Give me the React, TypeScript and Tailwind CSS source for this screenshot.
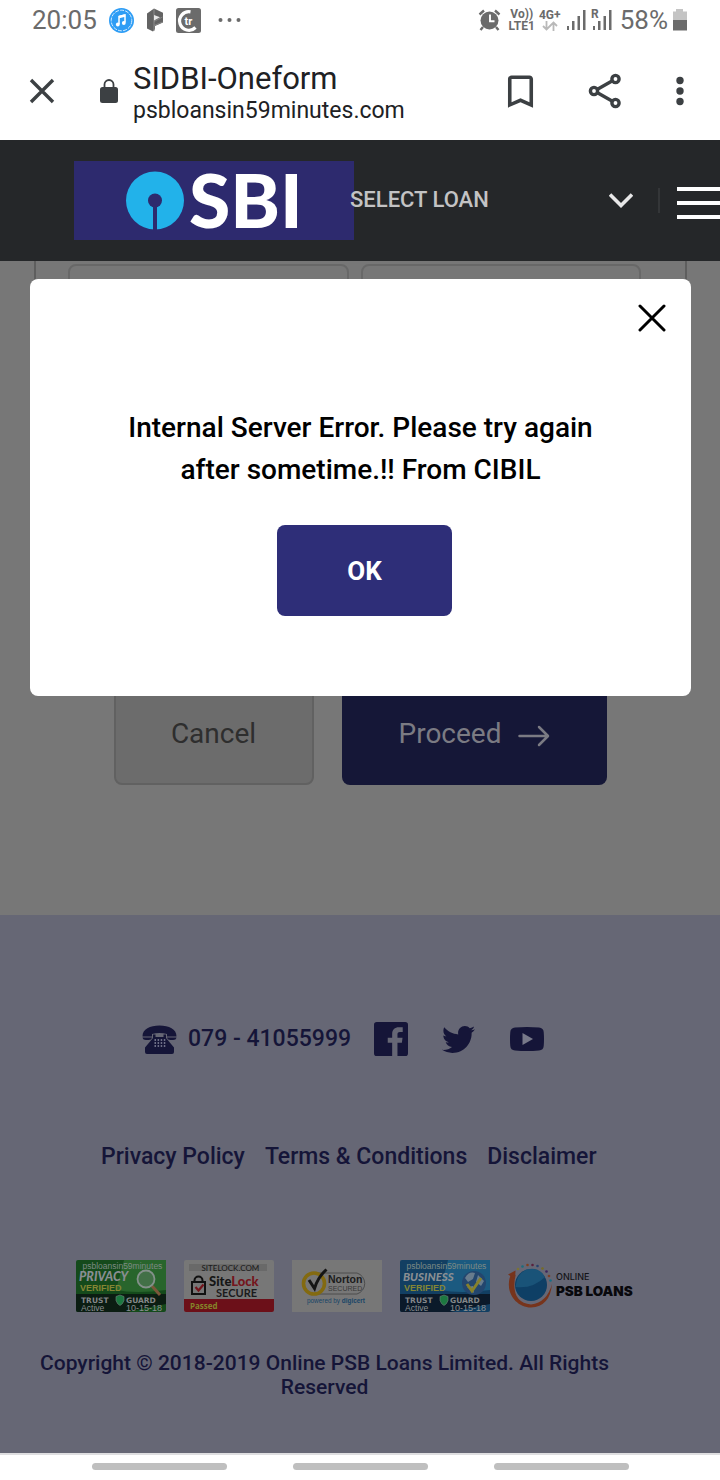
import React from "react";
import { FaTwitter } from "react-icons/fa";
import { MdBookmarkBorder } from "react-icons/md";

function StatusBar() {
  return (
    <div className="flex h-10 items-center bg-white pl-8 pr-8 text-[26px] leading-8 text-[#6b6b6b]">
      <span>20:05</span>
      <svg className="ml-3" width="25" height="25" viewBox="0 0 25 25" aria-hidden="true">
        <circle cx="12.5" cy="12.5" r="12.5" fill="#2e9df5" />
        <circle cx="12.5" cy="12.5" r="10.3" fill="none" stroke="#d5ecff" strokeWidth="1" strokeDasharray="4 1.2" />
        <path d="M10 16V8.500l6-1.500v7.500" fill="none" stroke="#fff" strokeWidth="1.500" />
        <path d="M10 9l6-1.500" stroke="#fff" strokeWidth="2.400" />
        <circle cx="8.800" cy="16.500" r="1.900" fill="#fff" />
        <circle cx="14.800" cy="15" r="1.900" fill="#fff" />
      </svg>
      <svg className="ml-3" width="18" height="24" viewBox="0 0 18 24" aria-hidden="true">
        <path d="M1 5.500 8 .5l9 4.200v9.800l-8 3.500v3L7 23.500 1 20.500z" fill="#636363" />
        <path d="M8 1v22" stroke="#8d8d8d" strokeWidth="1" />
        <path d="M8 17.500l8.500-3.500M8 13.500l8.500-4.500" stroke="#8d8d8d" strokeWidth=".8" />
        <path d="M8 7l6 2.200L8 12.500z" fill="#e8e8e8" />
      </svg>
      <svg className="ml-3" width="25" height="25" viewBox="0 0 25 25" aria-hidden="true">
        <rect width="25" height="25" rx="2.500" fill="#6b6b6b" />
        <path d="M14.500 3.800A9.300 9.300 0 1 0 19.500 19.500" fill="none" stroke="#fff" strokeWidth="3.200" />
        <text x="8.500" y="16.500" fontSize="11" fontWeight="700" fill="#fff" fontFamily="Roboto, sans-serif">tr</text>
      </svg>
      <svg className="ml-4" width="26" height="6" viewBox="0 0 26 6" fill="#6b6b6b" aria-hidden="true">
        <circle cx="3.500" cy="3" r="2" />
        <circle cx="12.500" cy="3" r="2" />
        <circle cx="21.500" cy="3" r="2" />
      </svg>
      <div className="ml-auto flex items-center">
        <svg width="24" height="24" viewBox="0 0 24 24" aria-hidden="true">
          <circle cx="11.500" cy="12.500" r="9" fill="#6b6b6b" />
          <path d="M1.500 6.500l4.500-4M17 2.500l4.500 4M5 19l-2.500 3M18 19l2.500 3" stroke="#6b6b6b" strokeWidth="2.400" />
          <path d="M12 6.500v6.700h4.500" fill="none" stroke="#fff" strokeWidth="1.900" />
        </svg>
        <span className="ml-1 w-8 text-center text-[12px] font-bold leading-3">
          Vo))
          <br />
          LTE1
        </span>
        <span className="flex w-6 flex-col items-center">
          <span className="text-[12px] font-bold leading-3">4G+</span>
          <svg width="16" height="10" viewBox="0 0 16 10" fill="none" stroke="#b9b9b9" strokeWidth="1.800" aria-hidden="true">
            <path d="M4.500 0v8M1 5l3.500 3.500L8 5M11.500 10V1.500M8 5l3.500-3.500L15 5" />
          </svg>
        </span>
        <svg className="ml-1" width="48" height="24" viewBox="0 0 48 24" fill="#6b6b6b" aria-hidden="true">
          <path d="M1 18h2v4H1zM6 13h2.500v9H6zM11.500 8h2.500v14h-2.500zM17 2h2.500v20H17zM27 18h2v4h-2zM32 13h2.500v9H32zM37.500 8H40v14h-2.500zM43 2h2.500v20H43z" />
          <text x="25" y="10" fontSize="12" fontWeight="700" fontFamily="Roboto, sans-serif">R</text>
        </svg>
        <span className="ml-1.5">58%</span>
        <svg className="ml-1" width="16" height="22" viewBox="0 0 16 22" aria-hidden="true">
          <path d="M4 0h7v2.500h4V12H1V2.500h3z" fill="#c4c4c4" />
          <path d="M1 11h14v10.500H1z" fill="#6b6b6b" />
        </svg>
      </div>
    </div>
  );
}

function BrowserBar() {
  return (
    <div className="flex h-[100px] items-center bg-white pl-7 pr-[26px] pt-0.5 text-[#3c4043]">
      <button type="button" aria-label="Close tab" className="flex w-7 justify-center">
        <svg width="26" height="26" viewBox="0 0 26 26" stroke="currentColor" strokeWidth="3.400" aria-hidden="true">
          <path d="M2 2l22 22M24 2L2 24" />
        </svg>
      </button>
      <svg className="ml-11" width="18" height="24" viewBox="0 0 18 24" aria-hidden="true">
        <rect y="8" width="18" height="16" rx="2.500" fill="currentColor" />
        <path d="M4.500 9V5.500a4.500 4.500 0 0 1 9 0V9" fill="none" stroke="currentColor" strokeWidth="1.800" />
      </svg>
      <div className="ml-[15px] flex-1 pt-1 text-[#202124]">
        <div className="text-[31px] leading-9">SIDBI-Oneform</div>
        <div className="text-[23px] leading-7">psbloansin59minutes.com</div>
      </div>
      <button type="button" aria-label="Bookmark">
        <MdBookmarkBorder size={43} />
      </button>
      <button type="button" aria-label="Share" className="ml-[46px]">
        <svg width="34" height="36" viewBox="0 0 34 36" fill="none" stroke="currentColor" strokeWidth="3.400" aria-hidden="true">
          <circle cx="27.500" cy="6" r="3.600" />
          <circle cx="6" cy="18" r="3.600" />
          <circle cx="27.500" cy="30" r="3.600" />
          <path d="M9.500 16.200L24 8M9.500 19.800L24 28" />
        </svg>
      </button>
      <button type="button" aria-label="More options" className="ml-11 flex w-7 justify-center">
        <svg width="8" height="30" viewBox="0 0 8 30" fill="currentColor" aria-hidden="true">
          <circle cx="4" cy="4.500" r="3.700" />
          <circle cx="4" cy="15" r="3.700" />
          <circle cx="4" cy="25.500" r="3.700" />
        </svg>
      </button>
    </div>
  );
}

function SiteHeader() {
  return (
    <header className="flex h-[121px] items-center border-b border-[#252729] bg-[#252729] pl-[74px]">
      <a href="#home" aria-label="SBI" className="block bg-[#2d2a6e]">
        <svg width="280" height="79" viewBox="0 0 280 79" aria-hidden="true">
          <circle cx="81" cy="39.500" r="29" fill="#22b2ea" />
          <circle cx="81" cy="39.500" r="7" fill="#2d2a6e" />
          <path d="M79 43h4v27h-4z" fill="#2d2a6e" />
          <text x="115" y="67" fontSize="75" fontWeight="900" fill="#fff" fontFamily="Lato, sans-serif">SBI</text>
        </svg>
      </a>
      <div className="relative -ml-1 flex-1">
        <select aria-label="Select loan" className="w-full appearance-none bg-transparent text-[22px] font-medium leading-7 text-[#c3c3c4]">
          <option>SELECT LOAN</option>
        </select>
        <svg className="pointer-events-none absolute right-0 top-1.5" width="24" height="18" viewBox="0 0 24 18" fill="none" stroke="#e8e8e8" strokeWidth="3.600" aria-hidden="true">
          <path d="M1 2.500l11 11 11-11" />
        </svg>
      </div>
      <span className="ml-[25px] h-[25px] w-0.5 bg-[#343638]" />
      <button type="button" aria-label="Menu" className="ml-[17px] flex w-[43px] flex-col gap-2.5 pt-[5px]">
        <span className="h-1 w-full bg-white" />
        <span className="h-1 w-full bg-white" />
        <span className="h-1 w-full bg-white" />
      </button>
    </header>
  );
}

function LoanForm() {
  return (
    <section className="h-[654px] bg-[#777777]">
      <div className="ml-[34px] mr-[33px] h-[380px] border-x-2 border-[#5e5e5e] pl-8 pr-11 pt-[3px]">
        <div className="grid grid-cols-2 gap-3">
          <input aria-label="First name" className="h-24 w-full rounded-lg border-2 border-[#686868]" />
          <input aria-label="Last name" className="h-24 w-full rounded-lg border-2 border-[#686868]" />
        </div>
      </div>
      <div className="mt-[42px] flex justify-center gap-7 text-[28px] leading-8">
        <button type="button" className="h-[102px] w-[200px] rounded-lg border-2 border-[#616161] bg-[#6c6c6c] text-[#2e2e2e]">
          Cancel
        </button>
        <button type="button" className="flex h-[102px] w-[265px] items-center justify-center gap-4 rounded-lg bg-[#151737] text-[#7b7b83]">
          Proceed
          <svg className="mt-1" width="32" height="22" viewBox="0 0 32 22" fill="none" stroke="currentColor" strokeWidth="2.500" strokeLinecap="round" strokeLinejoin="round" aria-hidden="true">
            <path d="M1.500 11h28M21 2l9 9-9 9" />
          </svg>
        </button>
      </div>
    </section>
  );
}

function ErrorDialog() {
  return (
    <div role="alertdialog" aria-modal="true" aria-labelledby="error-message" className="absolute left-[30px] right-[29px] top-[18px] flex h-[417px] flex-col items-center rounded-lg bg-white pt-32 text-black">
      <button type="button" aria-label="Close" className="absolute right-[25px] top-[25px]">
        <svg width="28" height="28" viewBox="0 0 28 28" stroke="currentColor" strokeWidth="3" strokeLinecap="round" aria-hidden="true">
          <path d="M2 2l24 24M26 2L2 26" />
        </svg>
      </button>
      <p id="error-message" className="text-center text-[28px] font-medium leading-[42px]">
        Internal Server Error. Please try again
        <br />
        after sometime.!! From CIBIL
      </p>
      <button type="button" className="ml-2 mt-[34px] h-[91px] w-[175px] rounded-lg bg-[#2e2e78] text-[26px] font-bold leading-8 text-white">
        OK
      </button>
    </div>
  );
}

function Telephone() {
  return (
    <svg width="35" height="29" viewBox="0 0 35 29" aria-hidden="true">
      <path d="M.5 11.500C.5 4 8 .5 17.500.5S34.500 4 34.500 11.500H25V9q-7.500-2-15 0v2.500z" fill="#151538" />
      <path d="M.5 12.500H10Q9.500 15 6.500 15H4Q1 15 .5 12.500zM25 12.500h9.500Q34 15 31 15h-2.500q-3 0-3.500-2.500z" fill="#151538" />
      <path d="M11 9.500h2.500V12h8V9.500H24V13l8 9.500V27q0 2-2 2H5q-2 0-2-2v-4.500L11 13z" fill="#151538" />
      <path d="M12.500 15h11M12.500 18h11M12.500 21h11" stroke="#8b8ca0" strokeWidth="1.300" strokeDasharray="1.500 1.600" />
    </svg>
  );
}

function TrustGuardSeal({ kind }: { kind: "PRIVACY" | "BUSINESS" }) {
  const privacy = kind === "PRIVACY";
  return (
    <svg width="90" height="52" viewBox="0 0 90 52" fontFamily="'Liberation Sans', sans-serif" role="img" aria-label={`${kind} verified, Trust Guard`}>
      <rect width="90" height="52" rx="2" fill={privacy ? "#144a1b" : "#123f62"} />
      <path d="M48 0h42v30Q60 34 40 30z" fill={privacy ? "#28652c" : "#1b5a80"} />
      <path d="M0 34h90v10L50 52H2q-2 0-2-2z" fill={privacy ? "#0b1d12" : "#0b1a2a"} />
      <text x="6.500" y="8.500" fontSize="8.500" fill="#7d8a84">psbloansin59minutes</text>
      <text x="3" y="20.500" fontSize={privacy ? 12.500 : 11.500} fontWeight="900" fontStyle="italic" fill="#898e92" fontFamily="Lato, sans-serif">{kind}</text>
      <text x="4" y="30.500" fontSize="9" fontWeight="700" fill="#858634">VERIFIED</text>
      <text x="5" y="42.500" fontSize="7.500" fontWeight="700" fill="#848789" fontFamily="'DejaVu Sans', sans-serif">TRUST</text>
      <text x="50" y="42.500" fontSize="7.500" fontWeight="700" fill="#848789" fontFamily="'DejaVu Sans', sans-serif">GUARD</text>
      <text x="5" y="50.500" fontSize="8.600" fill="#8a8f91">Active</text>
      <text x="50" y="50.500" fontSize="9" fill="#8a8f91">10-15-18</text>
      <path d="M40 36.500l4-1.500 4 1.500v4q-1 3.500-4 5-3-1.500-4-5z" fill="#1c7840" stroke="#6f8078" strokeWidth=".6" />
      {privacy ? (
        <g fill="none">
          <path d="M76 26l8 9" stroke="#7b573a" strokeWidth="3" />
          <circle cx="70" cy="19" r="8.500" fill="#427047" stroke="#83908a" strokeWidth="1.800" />
        </g>
      ) : (
        <g>
          <circle cx="74" cy="23" r="12" fill="#23466e" />
          <path d="M65 18q4-7 10-5l-2 6-5 3zM78 15l6 6-3 5-5-4zM67 27l6-1 1 7z" fill="#687c8d" />
          <path d="M67 24l5 7 9-13" fill="none" stroke="#86812b" strokeWidth="3" />
        </g>
      )}
    </svg>
  );
}

function SiteLockSeal() {
  return (
    <svg width="90" height="52" viewBox="0 0 90 52" fontFamily="Lato, sans-serif" role="img" aria-label="SiteLock secure">
      <rect width="90" height="52" rx="2" fill="#777777" />
      <rect x="5" y="4" width="78" height="7" fill="#696969" />
      <path d="M0 39h90v11q0 2-2 2H2q-2 0-2-2z" fill="#6c1019" />
      <text x="17.500" y="10.500" fontSize="8" fill="#1c1c1c">SITELOCK.COM</text>
      <rect x="8" y="22" width="13" height="12" fill="none" stroke="#111" strokeWidth="2" />
      <path d="M10.500 22v-1.500a4 4 0 0 1 8 0V22" fill="none" stroke="#111" strokeWidth="2" />
      <path d="M11.500 27l3 3.500 5-6" fill="none" stroke="#74151c" strokeWidth="2.200" />
      <text x="25" y="26" fontSize="13" fontWeight="900" fill="#151515">
        Site<tspan fill="#74151c">Lock</tspan>
      </text>
      <text x="32" y="37" fontSize="11" fontWeight="700" fill="#1b1b1b">SECURE</text>
      <text x="6" y="49" fontSize="8" fontWeight="700" fill="#848429" fontFamily="'Open Sans', sans-serif">Passed</text>
    </svg>
  );
}

function NortonSeal() {
  return (
    <svg width="90" height="52" viewBox="0 0 90 52" fontFamily="'Liberation Sans', sans-serif" role="img" aria-label="Norton secured, powered by digicert">
      <rect width="90" height="52" fill="#777777" />
      <path d="M24 13h41a11 11 0 0 1 0 21H24" fill="none" stroke="#474747" strokeWidth=".9" />
      <circle cx="22" cy="23.500" r="10.500" fill="#777" stroke="#836a10" strokeWidth="3.600" />
      <path d="M17 20l5.500 8.500Q26 17 34.500 9.500" fill="none" stroke="#151515" strokeWidth="3" />
      <text x="36" y="23" fontSize="10.500" fontWeight="700" fill="#1c1c1c">Norton</text>
      <text x="36" y="31" fontSize="7" fill="#393939">SECURED</text>
      <text x="15" y="43" fontSize="6.400" fill="#174567">powered by <tspan fontWeight="700">digicert</tspan></text>
    </svg>
  );
}

function PsbLoansLogo() {
  return (
    <svg width="130" height="52" viewBox="0 0 130 52" fontFamily="Inter, sans-serif" role="img" aria-label="Online PSB Loans">
      <circle cx="23" cy="25" r="16" fill="#0e3f65" />
      <path d="M7.500 27q1-13 11-17.500Q31 6 37 17q-12 12-29.500 10z" fill="#195378" />
      <path d="M3.500 13C-5 31 8 47.500 23 47.500q19-1 21-23.500-5 18.500-21 20.500Q2 42 7.500 15z" fill="#77341c" />
      <path d="M0 14.500l7.500-4-.5 8.500z" fill="#77341c" />
      <g>
        <circle cx="10" cy="9" r="1.300" fill="#7a7435" />
        <circle cx="14.500" cy="6.500" r="1.300" fill="#1b6d7c" />
        <circle cx="19.500" cy="5" r="1.300" fill="#80401d" />
        <circle cx="24.500" cy="5" r="1.300" fill="#59203d" />
        <circle cx="29.500" cy="6" r="1.300" fill="#28416c" />
        <circle cx="34.500" cy="8.500" r="1.300" fill="#766c24" />
        <circle cx="38.500" cy="11.500" r="1.300" fill="#3b245c" />
        <circle cx="41" cy="16" r="1.300" fill="#79402a" />
        <circle cx="42.500" cy="20.500" r="1.300" fill="#176e88" />
      </g>
      <text x="48" y="20" fontSize="9" fontWeight="500" fill="#141418">ONLINE</text>
      <text x="48" y="36" fontSize="13.500" fontWeight="900" fill="#08080c">PSB LOANS</text>
    </svg>
  );
}

function SiteFooter() {
  return (
    <footer className="bg-[#666775] pb-[54px] pt-[104px] font-medium text-[#151538]">
      <div className="flex h-10 items-center pl-[142px]">
        <Telephone />
        <a href="tel:07941055999" className="ml-[11px] w-[163px] whitespace-nowrap text-[23px] leading-7">079 - 41055999</a>
        <a href="#facebook" aria-label="Facebook" className="ml-[23px]">
          <svg width="34" height="34" viewBox="0 0 24 24" fill="currentColor" aria-hidden="true">
            <path d="M22 0H2Q0 0 0 2v20q0 2 2 2H12.820v-9.294H9.692v-3.622h3.128V8.413c0-3.100 1.893-4.788 4.659-4.788 1.325 0 2.463.099 2.795.143v3.240l-1.918.001c-1.504 0-1.795.715-1.795 1.763v2.313h3.587l-.467 3.622h-3.120V24H22q2 0 2-2V2q0-2-2-2z" />
          </svg>
        </a>
        <a href="#twitter" aria-label="Twitter" className="ml-[34px]">
          <FaTwitter size={33} />
        </a>
        <a href="#youtube" aria-label="YouTube" className="ml-[35px]">
          <svg width="34" height="24" viewBox="0 0 34 24" aria-hidden="true">
            <path d="M5 .5Q17-.5 29 .5q4.500.5 4.700 4.500.6 7 0 14-.2 4-4.700 4.500-12 1-24 0Q.5 23 .3 19q-.6-7 0-14Q.5 1 5 .5z" fill="currentColor" />
            <path d="M12.500 6l10.500 6-10.500 6z" fill="#787989" />
          </svg>
        </a>
      </div>
      <nav className="mt-[84px] flex gap-5 pl-[101px] text-[23px] leading-7">
        <a href="#privacy">Privacy Policy</a>
        <a href="#terms">Terms &amp; Conditions</a>
        <a href="#disclaimer">Disclaimer</a>
      </nav>
      <div className="mt-[89px] flex gap-[18px] pl-[76px]">
        <TrustGuardSeal kind="PRIVACY" />
        <SiteLockSeal />
        <NortonSeal />
        <TrustGuardSeal kind="BUSINESS" />
        <PsbLoansLogo />
      </div>
      <p className="mt-[39px] pl-7 pr-[99px] text-center text-[21px] leading-6">
        Copyright © 2018-2019 Online PSB Loans Limited. All Rights Reserved
      </p>
    </footer>
  );
}

function NavigationBar() {
  return (
    <div className="flex flex-1 justify-center gap-[66px] border-t-2 border-[#dedee0] bg-white pt-2 shadow-[0_-2px_5px_rgba(60,40,60,0.45)]">
      <button type="button" aria-label="Recent apps" className="h-[7px] w-[135px] rounded-full bg-[#bfbfbf]" />
      <button type="button" aria-label="Home" className="h-[7px] w-[135px] rounded-full bg-[#bfbfbf]" />
      <button type="button" aria-label="Back" className="h-[7px] w-[135px] rounded-full bg-[#bfbfbf]" />
    </div>
  );
}

export default function App() {
  return (
    <div className="flex min-h-screen flex-col overflow-x-hidden bg-white font-[Roboto,sans-serif]">
      <StatusBar />
      <BrowserBar />
      <SiteHeader />
      <main className="relative">
        <LoanForm />
        <SiteFooter />
        <ErrorDialog />
      </main>
      <NavigationBar />
    </div>
  );
}
